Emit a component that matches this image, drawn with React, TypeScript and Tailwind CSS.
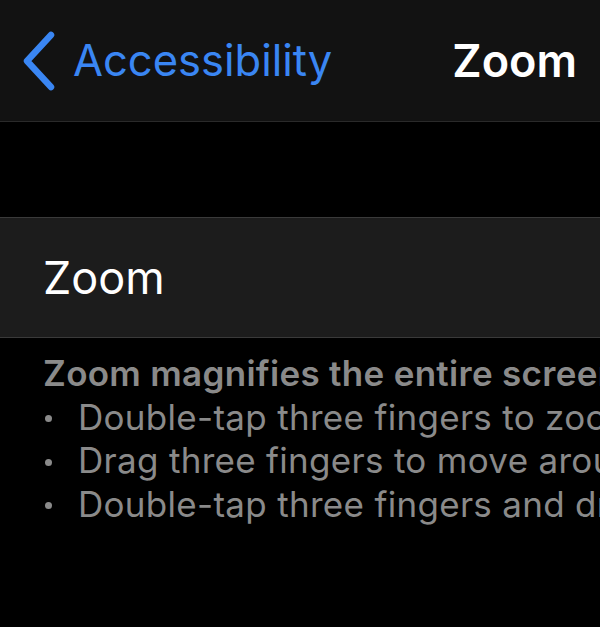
import React from "react";

const tips = [
  "Double-tap three fingers to zoom",
  "Drag three fingers to move around the screen",
  "Double-tap three fingers and drag to change zoom",
];

export default function App() {
  return (
    <div
      className="w-[600px] h-[627px] bg-black overflow-hidden"
      style={{ fontFamily: "Inter, Roboto, 'Liberation Sans', sans-serif" }}
    >
      {/* Nav bar */}
      <div className="h-[122px] bg-[#121212] border-b border-[#2a2a2a] flex items-center justify-between pl-[23px] pr-[23px]">
        <div className="flex items-center gap-[18px]">
          <svg width="32" height="60" viewBox="0 0 32 60" fill="none">
            <path
              d="M28 4 L4 30 L28 56"
              stroke="#3a86f3"
              strokeWidth="6.5"
              strokeLinecap="round"
              strokeLinejoin="round"
            />
          </svg>
          <span className="text-[43.5px] leading-none text-[#3a86f3]">Accessibility</span>
        </div>
        <span className="text-[45px] leading-none font-semibold text-white">Zoom</span>
      </div>

      <div className="h-[95px]" />

      {/* Zoom row */}
      <div className="h-[121px] bg-[#1c1c1c] border-y border-[#3a3a3a] flex items-center pl-[43px]">
        <span className="text-[45px] leading-none text-white">Zoom</span>
      </div>

      {/* Footer */}
      <div className="pl-[43px] pt-[14px] text-[#8a8a8a] text-[35px] tracking-[0.3px] leading-[43.5px] whitespace-nowrap">
        <p className="font-semibold">Zoom magnifies the entire screen:</p>
        {tips.map((t) => (
          <div key={t} className="flex items-center">
            <span className="w-[35px] shrink-0 flex items-center pl-[2px] pt-[3px]">
              <span className="w-[7px] h-[7px] rounded-full bg-[#8a8a8a]" />
            </span>
            <span>{t}</span>
          </div>
        ))}
      </div>
    </div>
  );
}
